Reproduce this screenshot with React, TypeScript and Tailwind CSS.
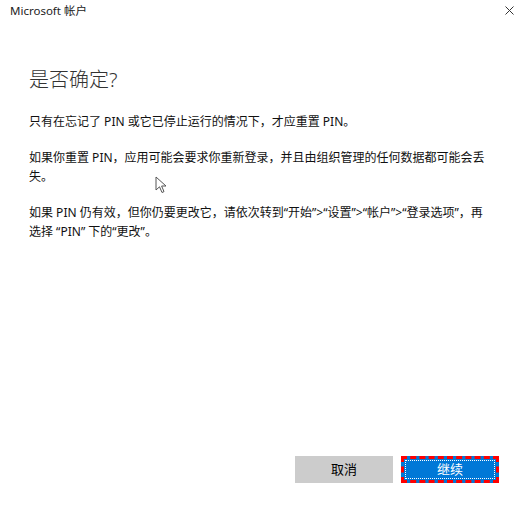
import React from "react";

const font = { fontFamily: '"Noto Sans", "Noto Sans CJK SC", sans-serif' };

function Pointer() {
  return (
    <svg className="absolute left-[155px] top-[176px]" width="13" height="18" viewBox="0 0 13 18">
      <path
        d="M1 1 L1 14 L4.5 10.8 L7 16.5 L9 15.6 L6.6 10 L11 10 Z"
        fill="#fff"
        stroke="#555"
        strokeWidth="1"
        strokeLinejoin="round"
      />
    </svg>
  );
}

export default function App() {
  return (
    <div className="relative w-[527px] h-[511px] bg-white flex flex-col text-black" style={font}>
      {/* title bar */}
      <div className="flex items-center justify-between h-[21px] pl-[10px] pr-[13px]">
        <span className="text-[11.5px] text-[#222] leading-none">Microsoft 帐户</span>
        <svg width="9" height="9" viewBox="0 0 9 9">
          <path d="M0.5 0.5 L8.5 8.5 M8.5 0.5 L0.5 8.5" stroke="#333" strokeWidth="1" />
        </svg>
      </div>

      <div className="flex-1 pl-[29px] pr-[37px] pt-[45px]">
        <h1 className="text-[20px] leading-[28px] text-[#333] font-light">是否确定?</h1>
        <div className="mt-[18px] text-[12px] leading-[19px] text-[#111] flex flex-col gap-[17px]">
          <p>只有在忘记了 PIN 或它已停止运行的情况下，才应重置 PIN。</p>
          <p>如果你重置 PIN，应用可能会要求你重新登录，并且由组织管理的任何数据都可能会丢失。</p>
          <p>如果 PIN 仍有效，但你仍要更改它，请依次转到“开始”&gt;“设置”&gt;“帐户”&gt;“登录选项”，再选择 “PIN” 下的“更改”。</p>
        </div>
      </div>

      {/* actions */}
      <div className="flex justify-end gap-[8px] pr-[28px] pb-[28px]">
        <button className="w-[98px] h-[27px] bg-[#cccccc] text-[13px] text-black">取消</button>
        <button className="w-[98px] h-[27px] bg-[#0078d7] border-[3px] border-dashed border-[#ff0000] p-[1px] text-[13px] text-white">
          <span className="flex items-center justify-center w-full h-full border border-dotted border-white">
            继续
          </span>
        </button>
      </div>

      <Pointer />
    </div>
  );
}
